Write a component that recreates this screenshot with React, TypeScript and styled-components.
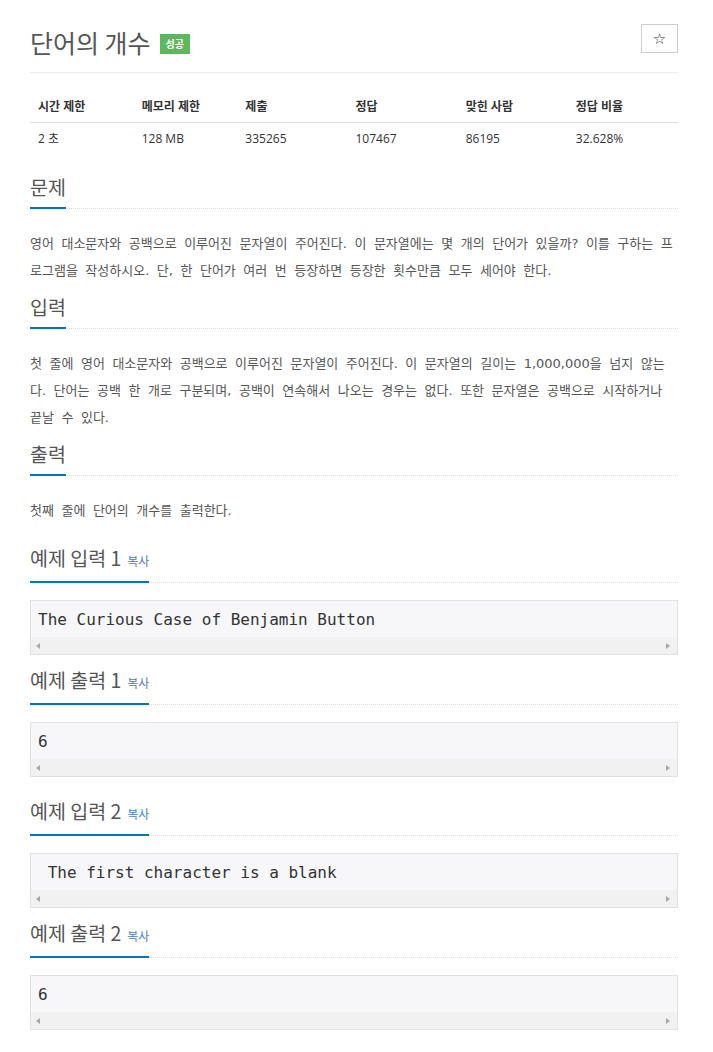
import React from 'react';
import styled, { createGlobalStyle } from 'styled-components';

const GlobalStyle = createGlobalStyle`
  html, body { margin: 0; padding: 0; background: #fff; }
  body {
    font-family: "Open Sans", "Noto Sans CJK KR", sans-serif;
    color: #555;
  }
  * { box-sizing: border-box; }
`;

const Page = styled.div`
  padding: 24px 35px 20px 30px;
`;

const Header = styled.header`
  display: flex;
  justify-content: space-between;
  align-items: flex-start;
  padding-bottom: 18px;
  border-bottom: 1px solid #eee;
`;

const TitleGroup = styled.div`
  display: flex;
  align-items: center;
  gap: 9px;
  margin-top: 6px;
  height: 24px;
`;

const Title = styled.h1`
  margin: 0;
  font-size: 25px;
  font-weight: 400;
  line-height: 24px;
  color: #555;
  font-family: "Noto Sans CJK KR", sans-serif;
`;

const Badge = styled.span`
  display: inline-flex;
  align-items: center;
  height: 20px;
  padding: 0 6px;
  margin-top: 3px;
  background: #5cb85c;
  color: #fff;
  font-size: 10px;
  font-weight: 700;
  font-family: "Noto Sans CJK KR", sans-serif;
`;

const StarButton = styled.button`
  width: 37px;
  height: 29px;
  padding: 0;
  border: 1px solid #ccc;
  border-radius: 0;
  background: #fff;
  display: flex;
  align-items: center;
  justify-content: center;
  font-family: "DejaVu Sans", sans-serif;
  font-size: 15px;
  color: #333;
`;

const InfoTable = styled.table`
  width: 100%;
  margin-top: 15px;
  border-collapse: collapse;
  table-layout: fixed;
  font-size: 12px;
  color: #333;
`;

const Th = styled.th<{ $w: string }>`
  width: ${(p) => p.$w};
  padding: 10px 8px 6px;
  line-height: 18px;
  text-align: left;
  font-weight: 700;
  border-bottom: 1px solid #ddd;
`;

const Td = styled.td`
  padding: 7px 8px 7px;
  line-height: 18px;
`;

const Content = styled.div`
  display: flex;
  flex-direction: column;
  gap: 12px;
  margin-top: 21px;
`;

const Section = styled.section<{ $gap: number }>`
  display: flex;
  flex-direction: column;
  gap: ${(p) => p.$gap}px;
`;

const Headline = styled.div`
  display: flex;
  border-bottom: 1px dotted #ddd;
`;

const HeadTitle = styled.h2`
  margin: 0 0 -1px;
  padding-bottom: 9px;
  font-size: 19.5px;
  font-weight: 400;
  line-height: 22px;
  color: #555;
  font-family: "Noto Sans CJK KR", sans-serif;
  border-bottom: 2px solid #0076c0;
  display: flex;
  align-items: baseline;
`;

const CopyLink = styled.a`
  margin-left: 6px;
  font-size: 12px;
  color: #4a80c8;
  text-decoration: none;
  cursor: pointer;
`;

const Para = styled.p`
  margin: 0;
  font-family: "DejaVu Sans", "Noto Sans CJK KR", sans-serif;
  font-size: 13px;
  line-height: 27px;
  word-spacing: 3.4px;
  color: #555;
`;

const SampleRow = styled.div`
  display: flex;
  flex-direction: column;
  gap: 14px;
  margin-top: 11px;
`;

const SampleBox = styled.div`
  border: 1px solid #e1e1e4;
  background: #f7f7f9;
`;

const SampleText = styled.pre`
  margin: 0;
  padding: 9px 7px 7px;
  font-family: "DejaVu Sans Mono", monospace;
  font-size: 16px;
  line-height: 20px;
  color: #333;
  white-space: pre;
  overflow: hidden;
`;

const ScrollTrack = styled.div`
  height: 17px;
  background: #f1f1f1;
  display: flex;
  align-items: center;
  justify-content: space-between;
  padding: 0 7px 0 5px;
`;

const Arrow = styled.span<{ $dir: 'left' | 'right' }>`
  width: 0;
  height: 0;
  border-top: 3.5px solid transparent;
  border-bottom: 3.5px solid transparent;
  ${(p) =>
    p.$dir === 'left'
      ? 'border-right: 4px solid #a8a8a8;'
      : 'border-left: 4px solid #a8a8a8;'}
`;

const info = [
  { head: '시간 제한', value: '2 초', w: '16%' },
  { head: '메모리 제한', value: '128 MB', w: '16%' },
  { head: '제출', value: '335265', w: '17%' },
  { head: '정답', value: '107467', w: '17%' },
  { head: '맞힌 사람', value: '86195', w: '17%' },
  { head: '정답 비율', value: '32.628%', w: '17%' },
];

const sections = [
  {
    title: '문제',
    text: '영어 대소문자와 공백으로 이루어진 문자열이 주어진다. 이 문자열에는 몇 개의 단어가 있을까? 이를 구하는 프로그램을 작성하시오. 단, 한 단어가 여러 번 등장하면 등장한 횟수만큼 모두 세어야 한다.',
  },
  {
    title: '입력',
    text: '첫 줄에 영어 대소문자와 공백으로 이루어진 문자열이 주어진다. 이 문자열의 길이는 1,000,000을 넘지 않는다. 단어는 공백 한 개로 구분되며, 공백이 연속해서 나오는 경우는 없다. 또한 문자열은 공백으로 시작하거나 끝날 수 있다.',
  },
  {
    title: '출력',
    text: '첫째 줄에 단어의 개수를 출력한다.',
  },
];

const samples = [
  { input: 'The Curious Case of Benjamin Button', output: '6' },
  { input: ' The first character is a blank', output: '6' },
];

const Sample: React.FC<{ title: string; text: string }> = ({ title, text }) => (
  <Section $gap={17}>
    <Headline>
      <HeadTitle>
        {title}
        <CopyLink>복사</CopyLink>
      </HeadTitle>
    </Headline>
    <SampleBox>
      <SampleText>{text}</SampleText>
      <ScrollTrack>
        <Arrow $dir="left" />
        <Arrow $dir="right" />
      </ScrollTrack>
    </SampleBox>
  </Section>
);

export default function App() {
  return (
    <>
      <GlobalStyle />
      <Page>
        <Header>
          <TitleGroup>
            <Title>단어의 개수</Title>
            <Badge>성공</Badge>
          </TitleGroup>
          <StarButton aria-label="즐겨찾기">☆</StarButton>
        </Header>
        <InfoTable>
          <thead>
            <tr>
              {info.map((c) => (
                <Th key={c.head} $w={c.w}>
                  {c.head}
                </Th>
              ))}
            </tr>
          </thead>
          <tbody>
            <tr>
              {info.map((c) => (
                <Td key={c.head}>{c.value}</Td>
              ))}
            </tr>
          </tbody>
        </InfoTable>
        <Content>
          {sections.map((s) => (
            <Section key={s.title} $gap={21}>
              <Headline>
                <HeadTitle>{s.title}</HeadTitle>
              </Headline>
              <Para>{s.text}</Para>
            </Section>
          ))}
          {samples.map((s, i) => (
            <SampleRow key={i}>
              <Sample title={`예제 입력 ${i + 1}`} text={s.input} />
              <Sample title={`예제 출력 ${i + 1}`} text={s.output} />
            </SampleRow>
          ))}
        </Content>
      </Page>
    </>
  );
}
